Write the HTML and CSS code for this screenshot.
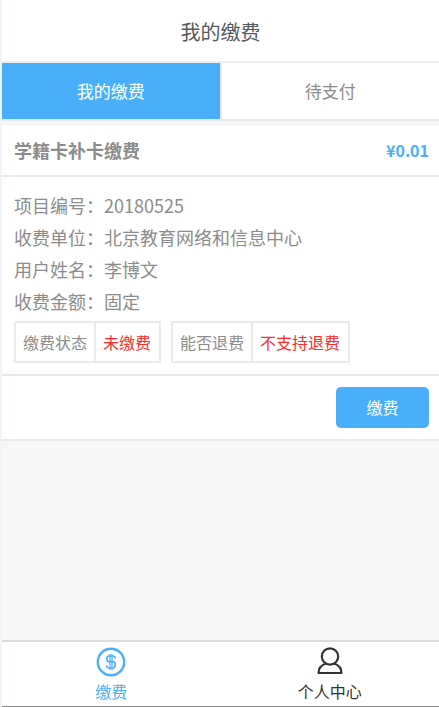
FILE: index.html
```html
<!doctype html>
<html lang="zh-CN">
<head>
    <meta charset="UTF-8">
    <meta name="viewport" content="width=device-width, initial-scale=1.0">
    <title>我的缴费</title>
    <link rel="stylesheet" href="styles.css">
</head>
<body>
<header class="header">
    <h1>我的缴费</h1>
</header>

<div class="tabs">
    <button type="button" class="tab active">我的缴费</button>
    <button type="button" class="tab">待支付</button>
</div>

<main class="content">
    <section class="card">
        <div class="card-head">
            <h2>学籍卡补卡缴费</h2>
            <span class="price">¥0.01</span>
        </div>
        <div class="card-body">
            <p>项目编号：20180525</p>
            <p>收费单位：北京教育网络和信息中心</p>
            <p>用户姓名：李博文</p>
            <p>收费金额：固定</p>
            <div class="tags">
                <div class="tag">
                    <span class="tag-name">缴费状态</span>
                    <span class="tag-value">未缴费</span>
                </div>
                <div class="tag">
                    <span class="tag-name">能否退费</span>
                    <span class="tag-value">不支持退费</span>
                </div>
            </div>
        </div>
        <div class="card-foot">
            <button type="button" class="pay">缴费</button>
        </div>
    </section>
</main>

<nav class="navbar">
    <a href="#" class="nav-item active">
        <svg width="30" height="30" viewBox="0 0 30 30" fill="none" stroke="currentColor">
            <circle cx="15" cy="15" r="13.200" stroke-width="2.400"/>
            <path d="M19.200 11.500c0-1.700-.7-2.500-2.200-2.500h-4c-1.500 0-2.200.8-2.200 2.800s.7 2.800 2.200 2.800h4c1.500 0 2.200.9 2.200 3.200s-.7 3.200-2.200 3.200h-4c-1.500 0-2.200-.8-2.200-2.500" stroke-width="1.600"/>
            <path d="M14 7v16M16 7v16" stroke-width="1.200"/>
        </svg>
        <span>缴费</span>
    </a>
    <a href="#" class="nav-item">
        <svg width="30" height="30" viewBox="0 0 30 30" fill="none" stroke="currentColor" stroke-width="2.200">
            <circle cx="15" cy="9.500" r="8.200"/>
            <path d="M11 16.500C6.500 18 3.500 21 3.500 26h23C26.500 21 23.500 18 19 16.500" stroke-linejoin="round"/>
        </svg>
        <span>个人中心</span>
    </a>
</nav>
</body>
</html>
```
FILE: styles.css
```css
* {
    box-sizing: border-box;
}
body {
    margin: 0;
    min-height: 100vh;
    display: flex;
    flex-direction: column;
    font-family: "Noto Sans CJK SC", sans-serif;
    color: #8c8c8c;
    background-color: #f7f7f7;
    border-left: 2px solid #f0f4ff;
}
h1, h2, p {
    margin: 0;
}
button {
    font-family: inherit;
    border: none;
    padding: 0;
    cursor: pointer;
}
.header {
    background-color: #fff;
    border-bottom: 2px solid #ececec;
    text-align: center;
}
.header h1 {
    padding-top: 2px;
    font-size: 20px;
    font-weight: 400;
    line-height: 59px;
    color: #55585c;
}
.tabs {
    display: flex;
    border-bottom: 2px solid #e8e8e8;
}
.tab {
    flex: 1;
    font-size: 17px;
    line-height: 56px;
    color: #8c8c8c;
    background-color: #fff;
}
.tab.active {
    color: #fff;
    background-color: #48aff8;
}
.tab + .tab {
    border-left: 2px solid #e8e8e8;
}
.content {
    flex: 1;
    padding-top: 5px;
}
.card {
    background-color: #fff;
    border-bottom: 2px solid #ebebeb;
}
.card-head {
    display: flex;
    justify-content: space-between;
    padding: 0 10px 0 12px;
    line-height: 49px;
    border-bottom: 2px solid #ebebeb;
}
.card-head h2 {
    font-size: 18px;
}
.price {
    font-size: 16px;
    font-weight: 700;
    color: #48aff8;
}
.card-body {
    padding: 12px 12px 11px;
    border-bottom: 2px solid #e8e8e8;
}
.card-body p {
    font-size: 18px;
    line-height: 32px;
}
.tags {
    display: flex;
    gap: 10px;
    margin-top: 4px;
}
.tag {
    display: flex;
    font-size: 16px;
    line-height: 38px;
    border: 2px solid #ebebeb;
}
.tag-name {
    padding: 0 7px;
}
.tag-value {
    padding: 0 8px 0 7px;
    color: #ff2a2a;
    border-left: 2px solid #ebebeb;
}
.card-foot {
    display: flex;
    justify-content: flex-end;
    padding: 11px 10px;
}
.pay {
    width: 93px;
    font-size: 16px;
    line-height: 41px;
    color: #fff;
    background-color: #48aff8;
    border-radius: 5px;
}
.navbar {
    display: flex;
    background-color: #fff;
    border-top: 2px solid #dcdcdc;
    border-bottom: 1px solid #8a8a8a;
}
.nav-item {
    flex: 1;
    display: flex;
    flex-direction: column;
    align-items: center;
    padding: 5px 0 1px;
    font-size: 16px;
    line-height: 28px;
    color: #333;
    text-decoration: none;
}
.nav-item.active {
    color: #48aff8;
}
```
